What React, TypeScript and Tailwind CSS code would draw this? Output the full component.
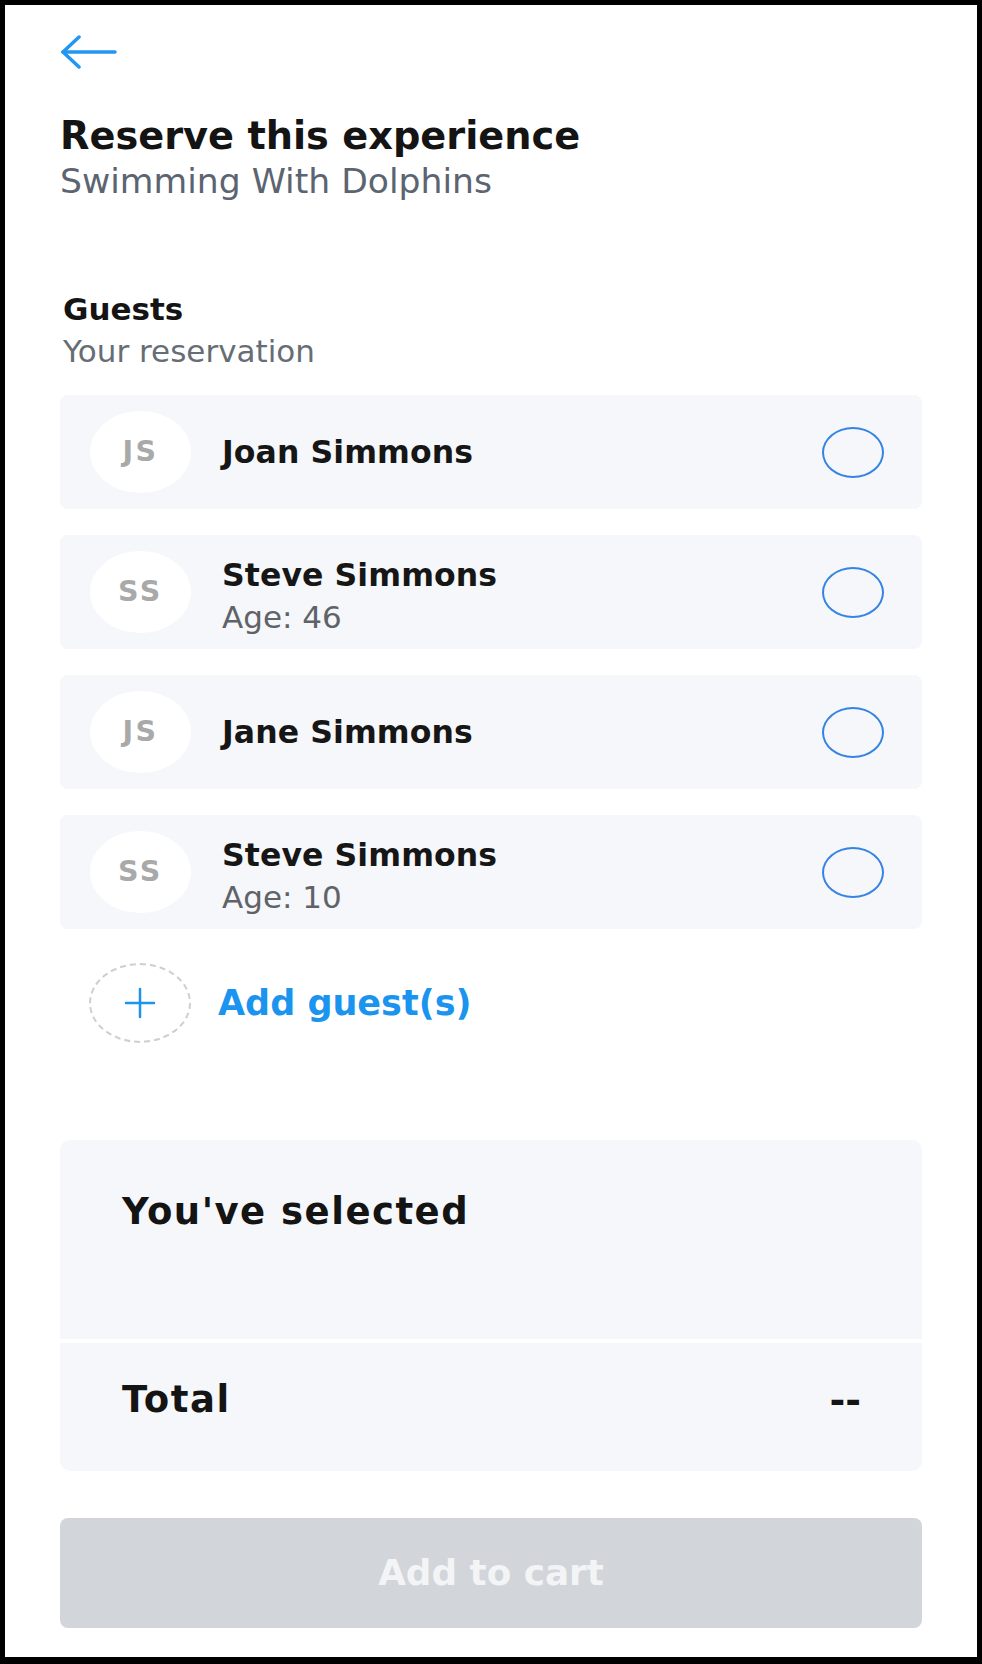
import React from "react";

const guests = [
  { initials: "JS", name: "Joan Simmons", age: null as string | null },
  { initials: "SS", name: "Steve Simmons", age: "46" },
  { initials: "JS", name: "Jane Simmons", age: null },
  { initials: "SS", name: "Steve Simmons", age: "10" },
];

function GuestCard({ initials, name, age }: { initials: string; name: string; age: string | null }) {
  return (
    <div className="flex h-[114px] items-center rounded-[8px] bg-[#f5f7fa] pl-[30px] pr-[38px]">
      <div className="flex h-[82px] w-[101px] shrink-0 items-center justify-center rounded-[50%] bg-white">
        <span className="text-[28.5px] font-bold tracking-[2.5px] text-[#a9a9a9]">{initials}</span>
      </div>
      <div className={age ? "ml-[31px] flex flex-1 flex-col pt-[7px]" : "ml-[31px] flex flex-1 flex-col"}>
        <span className="text-[31.5px] leading-[36px] font-bold tracking-[0.1px] text-[#161616]">{name}</span>
        {age && <span className="mt-[6px] text-[31px] leading-[36px] text-[#5f6368]">Age: {age}</span>}
      </div>
      <div className="h-[51px] w-[62px] shrink-0 rounded-[50%] border-2 border-[#3584e4]" />
    </div>
  );
}

export default function App() {
  return (
    <div className="h-[1664px] w-[982px] bg-black pt-[5px] pr-[5px] pb-[7px] pl-[5px]" style={{ fontFamily: '"DejaVu Sans", sans-serif' }}>
      <div className="flex h-full flex-col bg-white px-[55px]">
        <div className="mt-[30px]">
          <svg width="58" height="34" viewBox="0 0 58 34" fill="none" stroke="#2196f3" strokeWidth="3.5" strokeLinecap="round" strokeLinejoin="round">
            <path d="M3 17 H55" />
            <path d="M19 2 L3 17 L19 32" />
          </svg>
        </div>
        <h1 className="mt-[45px] text-[38.3px] leading-[44px] font-bold text-[#141414]">Reserve this experience</h1>
        <p className="mt-[3px] text-[34.6px] leading-[40px] text-[#5b6470]">Swimming With Dolphins</p>

        <h2 className="mt-[90px] pl-[3px] text-[31px] leading-[36px] font-bold text-[#141414]">Guests</h2>
        <p className="mt-[8px] pl-[3px] text-[31px] leading-[32px] text-[#666d75]">Your reservation</p>

        <div className="mt-[28px] flex flex-col gap-[26px]">
          {guests.map((g, i) => (
            <GuestCard key={i} {...g} />
          ))}
        </div>

        <div className="mt-[34px] flex items-center pl-[29px]">
          <div className="flex h-[80px] w-[102px] items-center justify-center rounded-[50%] border-2 border-dashed border-[#cfcfcf]">
            <svg width="34" height="34" viewBox="0 0 34 34" stroke="#1a94ee" strokeWidth="2.5" strokeLinecap="round">
              <path d="M17 3 V31" />
              <path d="M3 17 H31" />
            </svg>
          </div>
          <span className="ml-[27px] text-[35px] leading-[40px] font-bold text-[#1a94ee]">Add guest(s)</span>
        </div>

        <div className="mt-[97px] flex flex-col gap-[4px]">
          <div className="h-[199px] rounded-t-[10px] bg-[#f5f7fa] pt-[52px] pl-[62px]">
            <span className="text-[37px] leading-[40px] font-bold tracking-[1.5px] text-[#141414]">You've selected</span>
          </div>
          <div className="flex h-[128px] items-center justify-between rounded-b-[10px] bg-[#f5f7fa] pr-[61px] pb-[14px] pl-[62px]">
            <span className="text-[37px] leading-[40px] font-bold tracking-[1.5px] text-[#141414]">Total</span>
            <span className="text-[38px] leading-[40px] font-bold text-[#141414]">--</span>
          </div>
        </div>

        <button className="mt-[47px] flex h-[110px] w-full items-center justify-center rounded-[8px] bg-[#d2d5d9]">
          <span className="text-[35.8px] font-bold text-[#f3f4f6]">Add to cart</span>
        </button>
      </div>
    </div>
  );
}
